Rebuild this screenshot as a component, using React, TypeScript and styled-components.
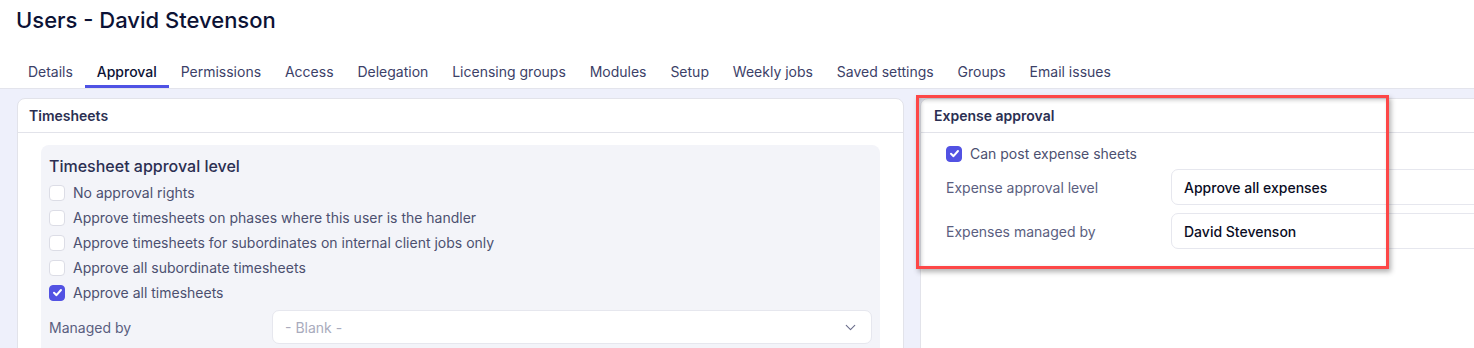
import React from "react";
import styled, { createGlobalStyle } from "styled-components";
import { ChevronDown } from "lucide-react";

const GlobalStyle = createGlobalStyle`
  body {
    margin: 0;
    font-family: Inter, "Noto Sans", Arial, sans-serif;
    background: #ffffff;
    overflow: hidden;
  }
`;

const Page = styled.div`
  width: 1600px;
  height: 348px;
  display: flex;
  flex-direction: column;
`;

const Title = styled.h1`
  margin: 0;
  padding: 7px 16px 0;
  height: 33px;
  line-height: 26px;
  font-size: 22px;
  font-weight: 500;
  color: #0c1235;
`;

const TabBar = styled.nav`
  display: flex;
  padding: 19px 0 0 16px;
  border-bottom: 1px solid #e3e4ec;
`;

const Tab = styled.div<{ $active?: boolean }>`
  padding: 0 11.95px;
  height: 33px;
  line-height: 40px;
  font-size: 14px;
  color: ${(p) => (p.$active ? "#0c1235" : "#3c4168")};
  font-weight: ${(p) => (p.$active ? 500 : 400)};
  border-bottom: 3px solid ${(p) => (p.$active ? "#4f52e4" : "transparent")};
`;

const Content = styled.div`
  flex: 1;
  background: #eef0fb;
  padding: 9px 17px 0;
  display: grid;
  grid-template-columns: 887px 700px;
  gap: 16px;
  align-items: start;
`;

const Card = styled.section`
  position: relative;
  background: #ffffff;
  border: 1px solid #e2e3ea;
  border-radius: 8px;
  height: 300px;
`;

const CardHeader = styled.div<{ $inset?: number }>`
  height: 33px;
  line-height: 34px;
  padding: 0 ${(p) => p.$inset ?? 11}px;
  font-size: 14px;
  font-weight: 600;
  color: #2b2f52;
  border-bottom: 1px solid #e2e3ea;
`;

const CardBody = styled.div<{ $pad: string }>`
  padding: ${(p) => p.$pad};
`;

const Section = styled.div`
  background: #f3f4f9;
  border-radius: 8px;
  padding: 10px 8px 0;
  width: 823px;
  height: 220px;
`;

const SectionTitle = styled.div`
  font-size: 16px;
  font-weight: 500;
  line-height: 22px;
  color: #2b2f52;
  margin-bottom: 3px;
`;

const CheckRow = styled.label`
  display: flex;
  align-items: center;
  gap: 8px;
  height: 25px;
  font-size: 14px;
  color: #4c5070;
`;

const Box = styled.span<{ $checked?: boolean }>`
  width: 16px;
  height: 16px;
  box-sizing: border-box;
  border-radius: 4px;
  border: 1px solid ${(p) => (p.$checked ? "#5252e3" : "#dcdde6")};
  background: ${(p) => (p.$checked ? "#5252e3" : "#ffffff")};
  display: flex;
  align-items: center;
  justify-content: center;
  flex-shrink: 0;
`;

const FieldRow = styled.div<{ $labelWidth: number; $top?: number }>`
  display: grid;
  grid-template-columns: ${(p) => p.$labelWidth}px 1fr;
  align-items: center;
  margin-top: ${(p) => p.$top ?? 8}px;
`;

const FieldLabel = styled.div`
  font-size: 14px;
  color: #5a5e80;
`;

const Select = styled.div<{ $height: number; $placeholder?: boolean }>`
  height: ${(p) => p.$height}px;
  box-sizing: border-box;
  background: #ffffff;
  border: 1px solid #e6e7ee;
  border-radius: 7px;
  display: flex;
  align-items: center;
  justify-content: space-between;
  padding: 0 12px;
  font-size: 14px;
  font-weight: ${(p) => (p.$placeholder ? 400 : 500)};
  color: ${(p) => (p.$placeholder ? "#a9abbd" : "#0a0d24")};
`;

const Highlight = styled.div`
  position: absolute;
  left: -5px;
  top: -4px;
  width: 467px;
  height: 168px;
  border: 3px solid #fd4747;
  box-shadow: 2px 3px 5px rgba(0, 0, 0, 0.3), inset 2px 2px 4px rgba(0, 0, 0, 0.22);
  pointer-events: none;
`;

const Check = ({ checked }: { checked?: boolean }) => (
  <Box $checked={checked}>
    {checked && (
      <svg width="11" height="11" viewBox="0 0 12 12" fill="none">
        <path d="M2.2 6.3 L4.9 8.9 L9.8 3.3" stroke="#fff" strokeWidth="2.2" strokeLinecap="round" strokeLinejoin="round" />
      </svg>
    )}
  </Box>
);

const tabs = [
  "Details",
  "Approval",
  "Permissions",
  "Access",
  "Delegation",
  "Licensing groups",
  "Modules",
  "Setup",
  "Weekly jobs",
  "Saved settings",
  "Groups",
  "Email issues",
];

const levels = [
  { text: "No approval rights" },
  { text: "Approve timesheets on phases where this user is the handler" },
  { text: "Approve timesheets for subordinates on internal client jobs only" },
  { text: "Approve all subordinate timesheets" },
  { text: "Approve all timesheets", checked: true },
];

export default function App() {
  return (
    <Page>
      <GlobalStyle />
      <Title>Users - David Stevenson</Title>
      <TabBar>
        {tabs.map((t) => (
          <Tab key={t} $active={t === "Approval"}>
            {t}
          </Tab>
        ))}
      </TabBar>
      <Content>
        <Card>
          <CardHeader>Timesheets</CardHeader>
          <CardBody $pad="12px 23px">
            <Section>
              <SectionTitle>Timesheet approval level</SectionTitle>
              {levels.map((l) => (
                <CheckRow key={l.text}>
                  <Check checked={l.checked} />
                  {l.text}
                </CheckRow>
              ))}
              <FieldRow $labelWidth={223} $top={5}>
                <FieldLabel>Managed by</FieldLabel>
                <Select $height={34} $placeholder>
                  - Blank -
                  <ChevronDown size={17} color="#6b6e8c" strokeWidth={1.6} />
                </Select>
              </FieldRow>
            </Section>
          </CardBody>
        </Card>
        <Card>
          <CardHeader $inset={13}>Expense approval</CardHeader>
          <CardBody $pad="8px 0 0 25px">
            <CheckRow>
              <Check checked />
              Can post expense sheets
            </CheckRow>
            <FieldRow $labelWidth={225} $top={3}>
              <FieldLabel>Expense approval level</FieldLabel>
              <Select $height={36}>Approve all expenses</Select>
            </FieldRow>
            <FieldRow $labelWidth={225}>
              <FieldLabel>Expenses managed by</FieldLabel>
              <Select $height={36}>David Stevenson</Select>
            </FieldRow>
          </CardBody>
          <Highlight />
        </Card>
      </Content>
    </Page>
  );
}
